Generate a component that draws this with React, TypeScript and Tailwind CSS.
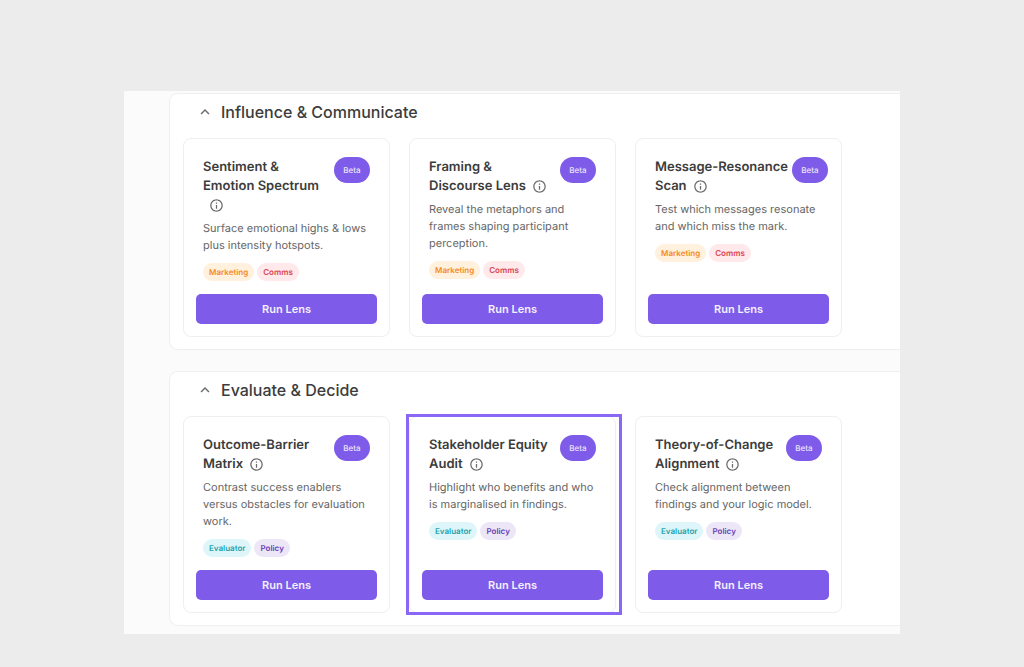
import { useState } from 'react';
import { MdInfoOutline, MdKeyboardArrowUp } from 'react-icons/md';
import { clsx } from 'clsx';

type Tag = 'Marketing' | 'Comms' | 'Evaluator' | 'Policy';

interface Lens {
  title: string[];
  description: string;
  tags: Tag[];
  selected?: boolean;
}

interface LensGroup {
  name: string;
  lenses: Lens[];
}

const TAG_STYLES: Record<Tag, string> = {
  Marketing: 'bg-[#fff1de] text-[#f58a1f]',
  Comms: 'bg-[#ffe9eb] text-[#dc4450]',
  Evaluator: 'bg-[#def6f9] text-[#23a2b0]',
  Policy: 'bg-[#ede6f6] text-[#6a3fb5]',
};

const GROUPS: LensGroup[] = [
  {
    name: 'Influence & Communicate',
    lenses: [
      {
        title: ['Sentiment &', 'Emotion Spectrum'],
        description: 'Surface emotional highs & lows plus intensity hotspots.',
        tags: ['Marketing', 'Comms'],
      },
      {
        title: ['Framing &', 'Discourse Lens'],
        description: 'Reveal the metaphors and frames shaping participant perception.',
        tags: ['Marketing', 'Comms'],
      },
      {
        title: ['Message-Resonance', 'Scan'],
        description: 'Test which messages resonate and which miss the mark.',
        tags: ['Marketing', 'Comms'],
      },
    ],
  },
  {
    name: 'Evaluate & Decide',
    lenses: [
      {
        title: ['Outcome-Barrier', 'Matrix'],
        description: 'Contrast success enablers versus obstacles for evaluation work.',
        tags: ['Evaluator', 'Policy'],
      },
      {
        title: ['Stakeholder Equity', 'Audit'],
        description: 'Highlight who benefits and who is marginalised in findings.',
        tags: ['Evaluator', 'Policy'],
        selected: true,
      },
      {
        title: ['Theory-of-Change', 'Alignment'],
        description: 'Check alignment between findings and your logic model.',
        tags: ['Evaluator', 'Policy'],
      },
    ],
  },
];

function LensCard({ lens }: { lens: Lens }) {
  return (
    <article className="relative flex flex-col rounded-lg border border-[#efefef] bg-white px-3 pt-[18px] pb-3">
      <div className="flex items-start gap-1 px-[7px]">
        <h3 className="flex-1 pt-px text-[13px] leading-[19px] font-semibold text-[#3c3c3c]">
          {lens.title.map((line, i) => (
            <span key={line}>
              <span className="whitespace-nowrap">{line}</span>
              {i < lens.title.length - 1 && <br />}
            </span>
          ))}
          <button type="button" aria-label="More info" className="ml-[6px] inline-block align-middle text-[#6b6b6b]">
            <MdInfoOutline className="size-[15px]" />
          </button>
        </h3>
        <span className="flex h-[26px] w-9 shrink-0 items-center justify-center rounded-full bg-[#7e5be8] text-[8px] font-medium text-[#ece6fc]">
          Beta
        </span>
      </div>
      <p className="mt-[5px] px-[7px] text-[11px] leading-[17px] text-[#666666]">{lens.description}</p>
      <div className="mt-[9px] mb-[13px] flex gap-[3px] px-[7px]">
        {lens.tags.map((tag) => (
          <span key={tag} className={clsx('h-[18px] rounded-full px-[6px] text-[8px] leading-[18px] font-semibold', TAG_STYLES[tag])}>
            {tag}
          </span>
        ))}
      </div>
      <button type="button" className="mt-auto h-[30px] rounded-[5px] bg-[#7e5be8] text-[11px] font-semibold text-[#f4f0fe]">
        Run Lens
      </button>
      {lens.selected && (
        <div className="pointer-events-none absolute -top-[3px] -right-[7px] -bottom-[3px] -left-1 border-3 border-[#8b67f5]" />
      )}
    </article>
  );
}

function LensSection({ group }: { group: LensGroup }) {
  const [open, setOpen] = useState(true);

  return (
    <section className="rounded-l-[9px] border border-r-0 border-[#efefef] bg-white pr-[58px] pb-3 pl-[13px]">
      <h2 className="mb-2 text-[16px] font-medium text-[#3c3c3c]">
        <button type="button" aria-expanded={open} onClick={() => setOpen(!open)} className="flex h-9 items-center gap-[7px] pl-[13px]">
          <MdKeyboardArrowUp className={clsx('size-[18px] text-[#6b6b6b]', !open && 'rotate-180')} />
          {group.name}
        </button>
      </h2>
      {open && (
        <div className="grid grid-cols-3 gap-[19px]">
          {group.lenses.map((lens) => (
            <LensCard key={lens.title[0]} lens={lens} />
          ))}
        </div>
      )}
    </section>
  );
}

export default function App() {
  return (
    <div className="min-h-screen bg-[#ececec] px-[124px] pt-[91px] pb-8 font-['Inter',sans-serif] antialiased [text-rendering:geometricPrecision]">
      <main className="flex flex-col gap-[21px] bg-[#fbfbfb] pt-[2px] pb-2 pl-[45px]">
        {GROUPS.map((group) => (
          <LensSection key={group.name} group={group} />
        ))}
      </main>
    </div>
  );
}
